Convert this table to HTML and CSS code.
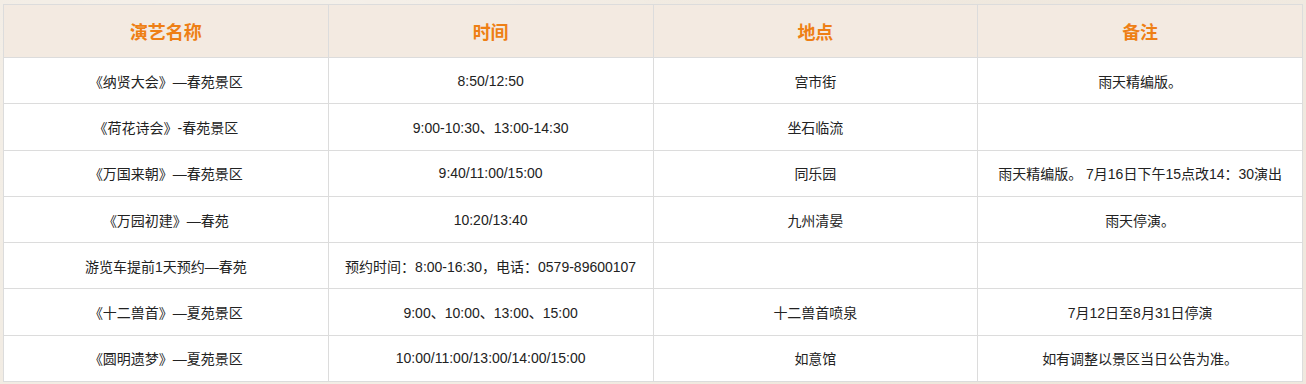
FILE: index.html
```html
<!DOCTYPE html>
<html lang="zh">
<head>
<meta charset="utf-8">
<link rel="stylesheet" href="styles.css">
</head>
<body>
<div class="page">
  <table class="schedule">
    <colgroup>
      <col class="c"><col class="c"><col class="c"><col class="c">
    </colgroup>
    <thead>
      <tr><th>演艺名称</th><th>时间</th><th>地点</th><th>备注</th></tr>
    </thead>
    <tbody>
      <tr><td>《纳贤大会》—春苑景区</td><td>8:50/12:50</td><td>宫市街</td><td>雨天精编版。</td></tr>
      <tr><td>《荷花诗会》-春苑景区</td><td>9:00-10:30、13:00-14:30</td><td>坐石临流</td><td></td></tr>
      <tr><td>《万国来朝》—春苑景区</td><td>9:40/11:00/15:00</td><td>同乐园</td><td>雨天精编版。 7月16日下午15点改14：30演出</td></tr>
      <tr><td>《万园初建》—春苑</td><td>10:20/13:40</td><td>九州清晏</td><td>雨天停演。</td></tr>
      <tr><td>游览车提前1天预约—春苑</td><td>预约时间：8:00-16:30，电话：0579-89600107</td><td></td><td></td></tr>
      <tr><td>《十二兽首》—夏苑景区</td><td>9:00、10:00、13:00、15:00</td><td>十二兽首喷泉</td><td>7月12日至8月31日停演</td></tr>
      <tr><td>《圆明遗梦》—夏苑景区</td><td>10:00/11:00/13:00/14:00/15:00</td><td>如意馆</td><td>如有调整以景区当日公告为准。</td></tr>
    </tbody>
  </table>
</div>
</body>
</html>
```

FILE: styles.css
```css
html, body {
  margin: 0;
  padding: 0;
}
body {
  width: 1306px;
  height: 384px;
  overflow: hidden;
  background-color: #f1ebe2;
  background-image:
    radial-gradient(circle at 20% 30%, rgba(255,255,255,0.35) 0, rgba(255,255,255,0) 40%),
    radial-gradient(circle at 80% 70%, rgba(230,220,205,0.4) 0, rgba(230,220,205,0) 45%);
  font-family: "Liberation Sans", Arial, "Noto Sans CJK SC", sans-serif;
}
.page {
  padding: 4px 0 0 3px;
}
.schedule {
  width: 1300px;
  border-collapse: collapse;
  table-layout: fixed;
  background: #ffffff;
}
.schedule .c {
  width: 25%;
}
.schedule th,
.schedule td {
  border: 1px solid #dcdcdc;
  text-align: center;
  vertical-align: middle;
  padding: 0 2px;
  white-space: nowrap;
}
.schedule th {
  height: 52px;
  background: #f3eae1;
  color: #ee7f15;
  font-size: 18px;
  font-weight: bold;
}
.schedule td {
  height: 45.3px;
  color: #222222;
  font-size: 14px;
}
```
